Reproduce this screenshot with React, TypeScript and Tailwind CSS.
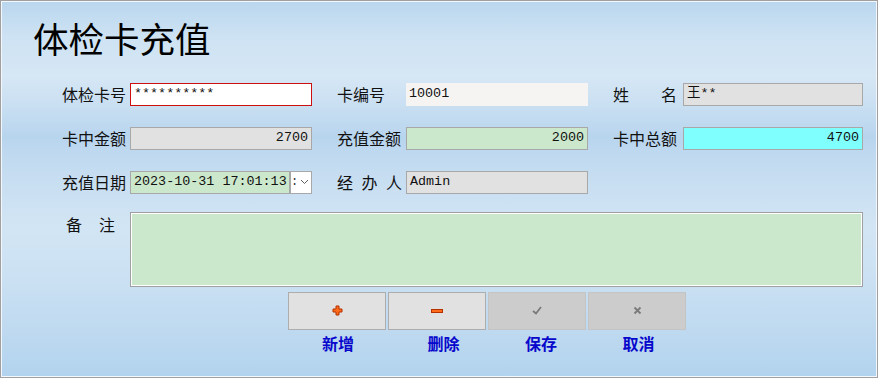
import type { ReactNode } from 'react';

const cjk = "font-['Noto_Sans_CJK_SC',sans-serif]";
const mono = "font-['Liberation_Mono','Noto_Sans_CJK_SC',monospace]";

function Label({ children, w }: { children: ReactNode; w: string }) {
  return (
    <div className={`${w} shrink-0 flex items-center text-[16px] leading-none text-[#111] ${cjk}`}>
      {children}
    </div>
  );
}

function Spread({ chars, w }: { chars: string[]; w: string }) {
  return (
    <div className={`${w} flex justify-between`}>
      {chars.map((c) => (
        <span key={c}>{c}</span>
      ))}
    </div>
  );
}

function Field({
  value,
  w,
  tone,
  right,
}: {
  value: string;
  w: string;
  tone: string;
  right?: boolean;
}) {
  return (
    <div
      className={`${w} h-[23px] shrink-0 flex items-center px-[3px] overflow-hidden whitespace-nowrap text-[13.4px] leading-none text-[#111] ${mono} ${tone} ${
        right ? 'justify-end' : ''
      }`}
    >
      {value}
    </div>
  );
}

function Plus() {
  return (
    <svg width="11" height="11" viewBox="0 0 11 11">
      <path d="M4 1h3v3h3v3H7v3H4V7H1V4h3z" fill="#ff6b1a" stroke="#b43200" strokeWidth="1" />
    </svg>
  );
}

function Minus() {
  return (
    <svg width="12" height="6" viewBox="0 0 12 6">
      <rect x="0.5" y="1.5" width="11" height="3" fill="#ff6b1a" stroke="#b43200" strokeWidth="1" />
    </svg>
  );
}

function Check() {
  return (
    <svg width="10" height="9" viewBox="0 0 10 9">
      <path d="M1 5l3 2.5L9 1" fill="none" stroke="#7a7a7a" strokeWidth="1.8" />
    </svg>
  );
}

function Cross() {
  return (
    <svg width="9" height="9" viewBox="0 0 9 9">
      <path d="M1.5 1.5l6 6M7.5 1.5l-6 6" fill="none" stroke="#7a7a7a" strokeWidth="1.8" />
    </svg>
  );
}

const inputGray = 'bg-[#e1e1e1] border border-[#a8a8a8]';
const inputGreen = 'bg-[#cce8cc] border border-[#a8a8a8]';

export default function App() {
  const buttons = [
    { icon: <Plus />, label: '新增', bg: 'bg-[#e1e1e1] border-[#adadad]', pad: 'pl-[2px]' },
    { icon: <Minus />, label: '删除', bg: 'bg-[#e1e1e1] border-[#adadad]', pad: 'pl-[13px]' },
    { icon: <Check />, label: '保存', bg: 'bg-[#cccccc] border-[#c4c4c4]', pad: 'pl-[8px]' },
    { icon: <Cross />, label: '取消', bg: 'bg-[#cccccc] border-[#c4c4c4]', pad: 'pl-[3px]' },
  ];

  return (
    <div className="w-[880px] h-[380px] bg-white">
      <div className="w-[878px] h-[378px] border border-[#a0a0a0] shadow-[inset_0_0_0_1px_#f4f8fc] bg-[linear-gradient(180deg,#b9d6ee_0%,#cde2f3_9%,#d6e7f5_20%,#c9dff2_28%,#b8d5ee_36%,#c6ddf1_46%,#d2e5f4_60%,#cbe1f3_74%,#c0daf0_86%,#b2d3ee_100%)] flex flex-col">
        <h1 className={`ml-[32px] mt-[19px] text-[35.5px] leading-none font-normal text-black ${cjk}`}>
          体检卡充值
        </h1>

        <div className="ml-[61px] mt-[27px] flex flex-col gap-[21px]">
          <div className="flex">
            <Label w="w-[68px]">体检卡号</Label>
            <Field value="**********" w="w-[182px]" tone="bg-white border border-[#cc1010]" />
            <Label w="w-[69px] ml-[25px]">卡编号</Label>
            <Field value="10001" w="w-[182px]" tone="bg-[#f5f4f3]" />
            <Label w="w-[70px] ml-[25px]">
              <Spread chars={['姓', '名']} w="w-[64px]" />
            </Label>
            <Field value="王**" w="w-[180px]" tone={inputGray} />
          </div>

          <div className="flex">
            <Label w="w-[68px]">卡中金额</Label>
            <Field value="2700" w="w-[182px]" tone={inputGray} right />
            <Label w="w-[69px] ml-[25px]">充值金额</Label>
            <Field value="2000" w="w-[182px]" tone={inputGreen} right />
            <Label w="w-[70px] ml-[25px]">卡中总额</Label>
            <Field value="4700" w="w-[180px]" tone="bg-[#80ffff] border border-[#a8a8a8]" right />
          </div>

          <div className="flex">
            <Label w="w-[68px]">充值日期</Label>
            <Field value="2023-10-31 17:01:13" w="w-[160px]" tone={inputGreen} />
            <div className="w-[22px] h-[23px] bg-white border border-[#a8a8a8] flex items-center">
              <span className={`text-[12px] leading-none text-[#333] ${mono}`}>:</span>
              <svg width="9" height="6" viewBox="0 0 9 6" className="ml-[2px]">
                <path d="M1 1l3.5 3.5L8 1" fill="none" stroke="#606060" strokeWidth="1" />
              </svg>
            </div>
            <Label w="w-[69px] ml-[25px]">
              <Spread chars={['经', '办', '人']} w="w-[65px]" />
            </Label>
            <Field value="Admin" w="w-[182px]" tone={inputGray} />
          </div>
        </div>

        <div className="ml-[61px] mt-[18px] flex">
          <div className={`w-[68px] pt-[4px] pl-[4px] text-[16px] leading-none text-[#111] ${cjk}`}>
            <Spread chars={['备', '注']} w="w-[49px]" />
          </div>
          <div className="w-[733px] h-[75px] bg-[#cce8cc] border border-[#a0a0a0] shadow-[inset_0_0_0_1px_#fff]" />
        </div>

        <div className="ml-[287px] mt-[5px] flex gap-[2px]">
          {buttons.map((b) => (
            <div
              key={b.label}
              className={`w-[98px] h-[38px] border ${b.bg} flex items-center justify-center`}
            >
              {b.icon}
            </div>
          ))}
        </div>

        <div className="ml-[287px] mt-[5px] flex gap-[2px]">
          {buttons.map((b) => (
            <div
              key={b.label}
              className={`w-[98px] ${b.pad} text-center text-[16px] leading-none font-bold text-[#0808cc] ${cjk}`}
            >
              {b.label}
            </div>
          ))}
        </div>
      </div>
    </div>
  );
}
